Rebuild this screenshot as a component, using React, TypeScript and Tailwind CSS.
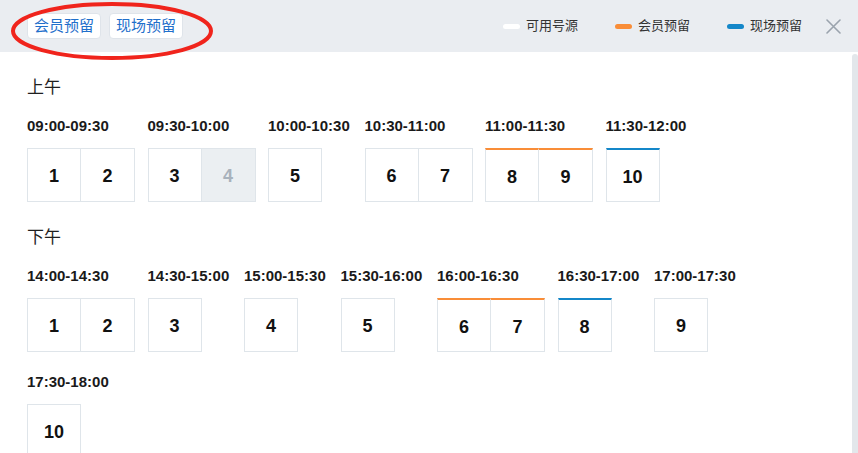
type Slot = { n: number; state?: "member" | "onsite" | "disabled" };
type Group = { time: string; slots: Slot[] };

const morning: Group[] = [
  { time: "09:00-09:30", slots: [{ n: 1 }, { n: 2 }] },
  { time: "09:30-10:00", slots: [{ n: 3 }, { n: 4, state: "disabled" }] },
  { time: "10:00-10:30", slots: [{ n: 5 }] },
  { time: "10:30-11:00", slots: [{ n: 6 }, { n: 7 }] },
  { time: "11:00-11:30", slots: [{ n: 8, state: "member" }, { n: 9, state: "member" }] },
  { time: "11:30-12:00", slots: [{ n: 10, state: "onsite" }] },
];

const afternoon: Group[] = [
  { time: "14:00-14:30", slots: [{ n: 1 }, { n: 2 }] },
  { time: "14:30-15:00", slots: [{ n: 3 }] },
  { time: "15:00-15:30", slots: [{ n: 4 }] },
  { time: "15:30-16:00", slots: [{ n: 5 }] },
  { time: "16:00-16:30", slots: [{ n: 6, state: "member" }, { n: 7, state: "member" }] },
  { time: "16:30-17:00", slots: [{ n: 8, state: "onsite" }] },
  { time: "17:00-17:30", slots: [{ n: 9 }] },
  { time: "17:30-18:00", slots: [{ n: 10 }] },
];

const font = { fontFamily: '"Liberation Sans", "Noto Sans CJK SC", sans-serif' };

function Cell({ slot, first }: { slot: Slot; first: boolean }) {
  const top =
    slot.state === "member"
      ? "border-t-2 border-t-[#f98d38]"
      : slot.state === "onsite"
        ? "border-t-2 border-t-[#1487c9]"
        : "";
  const bg = slot.state === "disabled" ? "bg-[#ebeff2] text-[#a8b2bc]" : "bg-white text-[#111]";
  return (
    <div
      className={`flex h-[54px] w-[54px] items-center justify-center border border-[#dfe5ea] pt-[3px] text-[18px] font-bold ${top} ${bg} ${first ? "" : "border-l-0"}`}>
      {slot.n}
    </div>
  );
}

function Section({ title, groups }: { title: string; groups: Group[] }) {
  return (
    <div className="mb-1">
      <h2 className="h-6 text-[17px] leading-6 text-[#1f1f1f]">{title}</h2>
      <div className="mt-4 flex flex-wrap gap-x-[12.5px]">
        {groups.map((g) => (
          <div key={g.time} className="mb-5 min-w-[84px]">
            <div className="h-5 whitespace-nowrap text-[15px] font-bold leading-5 text-[#1a1a1a]">{g.time}</div>
            <div className="mt-3 flex">
              {g.slots.map((s, i) => (
                <Cell key={s.n} slot={s} first={i === 0} />
              ))}
            </div>
          </div>
        ))}
      </div>
    </div>
  );
}

function Legend({ color, label }: { color: string; label: string }) {
  return (
    <div className="flex items-center gap-[6px]">
      <span className={`h-[5px] w-[17px] rounded-full ${color}`} />
      <span className="text-[13px] text-[#333]">{label}</span>
    </div>
  );
}

export default function App() {
  return (
    <div className="relative h-[453px] w-[858px] overflow-hidden bg-white" style={font}>
      {/* header */}
      <div className="flex h-[52px] items-center bg-[#eaedf1] pl-[27px] pr-[17px]">
        <div className="flex gap-2">
          <button className="h-[26px] rounded border border-[#dfe4ea] bg-white px-[6px] text-[15px] text-[#1f6fcb]">
            会员预留
          </button>
          <button className="h-[26px] rounded border border-[#dfe4ea] bg-white px-[6px] text-[15px] text-[#1f6fcb]">
            现场预留
          </button>
        </div>
        <div className="ml-auto flex items-center gap-[37px]">
          <Legend color="bg-white" label="可用号源" />
          <Legend color="bg-[#f98d38]" label="会员预留" />
          <Legend color="bg-[#1487c9]" label="现场预留" />
        </div>
        <svg className="ml-6" width="15" height="15" viewBox="0 0 15 15">
          <path d="M1 1L14 14M14 1L1 14" stroke="#9aa3ad" strokeWidth="1.6" strokeLinecap="round" />
        </svg>
      </div>

      {/* body */}
      <div className="flex">
        <div className="flex-1 px-[27px] pt-6">
          <Section title="上午" groups={morning} />
          <Section title="下午" groups={afternoon} />
        </div>
        <div className="mt-[2px] h-[420px] w-[6px] rounded-t-sm bg-[#e3e7eb]" />
      </div>

      {/* annotation ellipse */}
      <svg className="pointer-events-none absolute left-0 top-0" width="240" height="70">
        <ellipse cx="112" cy="31" rx="99" ry="27" fill="none" stroke="#f0241c" strokeWidth="4" />
      </svg>
    </div>
  );
}
